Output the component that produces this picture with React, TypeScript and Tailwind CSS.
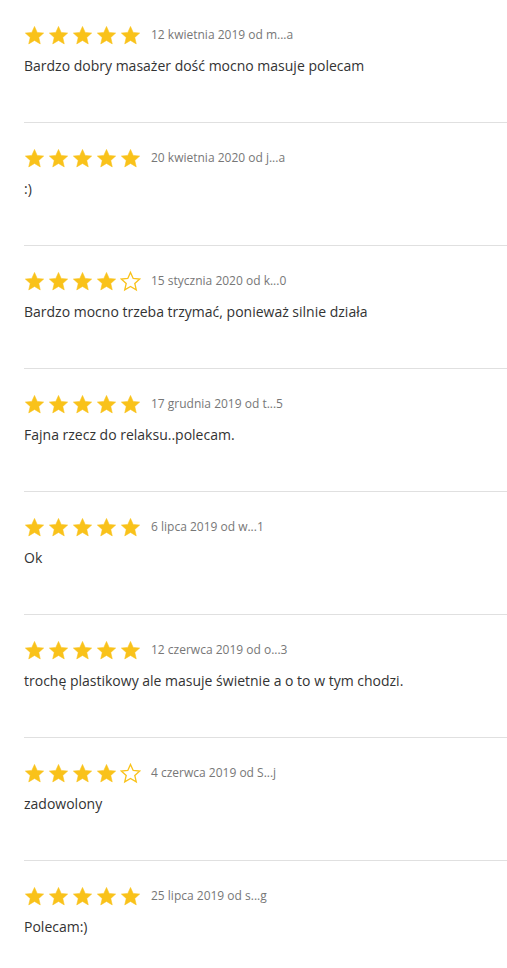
import React from 'react';

type Review = {
  rating: number;
  date: string;
  text: string;
};

const reviews: Review[] = [
  { rating: 5, date: '12 kwietnia 2019 od m...a', text: 'Bardzo dobry masażer dość mocno masuje polecam' },
  { rating: 5, date: '20 kwietnia 2020 od j...a', text: ':)' },
  { rating: 4, date: '15 stycznia 2020 od k...0', text: 'Bardzo mocno trzeba trzymać, ponieważ silnie działa' },
  { rating: 5, date: '17 grudnia 2019 od t...5', text: 'Fajna rzecz do relaksu..polecam.' },
  { rating: 5, date: '6 lipca 2019 od w...1', text: 'Ok' },
  { rating: 5, date: '12 czerwca 2019 od o...3', text: 'trochę plastikowy ale masuje świetnie a o to w tym chodzi.' },
  { rating: 4, date: '4 czerwca 2019 od S...j', text: 'zadowolony' },
  { rating: 5, date: '25 lipca 2019 od s...g', text: 'Polecam:)' },
];

const STAR = 'M12 1.6l3.1 6.9 7.4.7-5.6 5 1.7 7.4L12 17.7l-6.6 3.9 1.7-7.4-5.6-5 7.4-.7z';

const Star: React.FC<{ filled: boolean }> = ({ filled }) => (
  <svg width="21" height="21" viewBox="0 0 24 24" className="shrink-0">
    <path
      d={STAR}
      fill={filled ? '#f9c21a' : 'none'}
      stroke="#f9c21a"
      strokeWidth={filled ? 0.6 : 1.5}
      strokeLinejoin="miter"
    />
  </svg>
);

const ReviewItem: React.FC<{ review: Review }> = ({ review }) => (
  <div className="border-b border-[#e0e0e0] pt-[25px] pb-[46px]">
    <div className="flex items-center h-[20px]">
      <div className="flex gap-[3px]">
        {[0, 1, 2, 3, 4].map(i => (
          <Star key={i} filled={i < review.rating} />
        ))}
      </div>
      <span className="ml-[10px] text-[12px] text-[#777] leading-[20px]">{review.date}</span>
    </div>
    <p className="mt-[11px] text-[14px] leading-[20px] text-[#333]">{review.text}</p>
  </div>
);

const App: React.FC = () => {
  return (
    <div
      className="bg-white min-h-screen pl-[24px]"
      style={{ fontFamily: '"Open Sans", "Noto Sans", sans-serif' }}
    >
      {reviews.map((r, i) => (
        <ReviewItem key={i} review={r} />
      ))}
    </div>
  );
};

export default App;
